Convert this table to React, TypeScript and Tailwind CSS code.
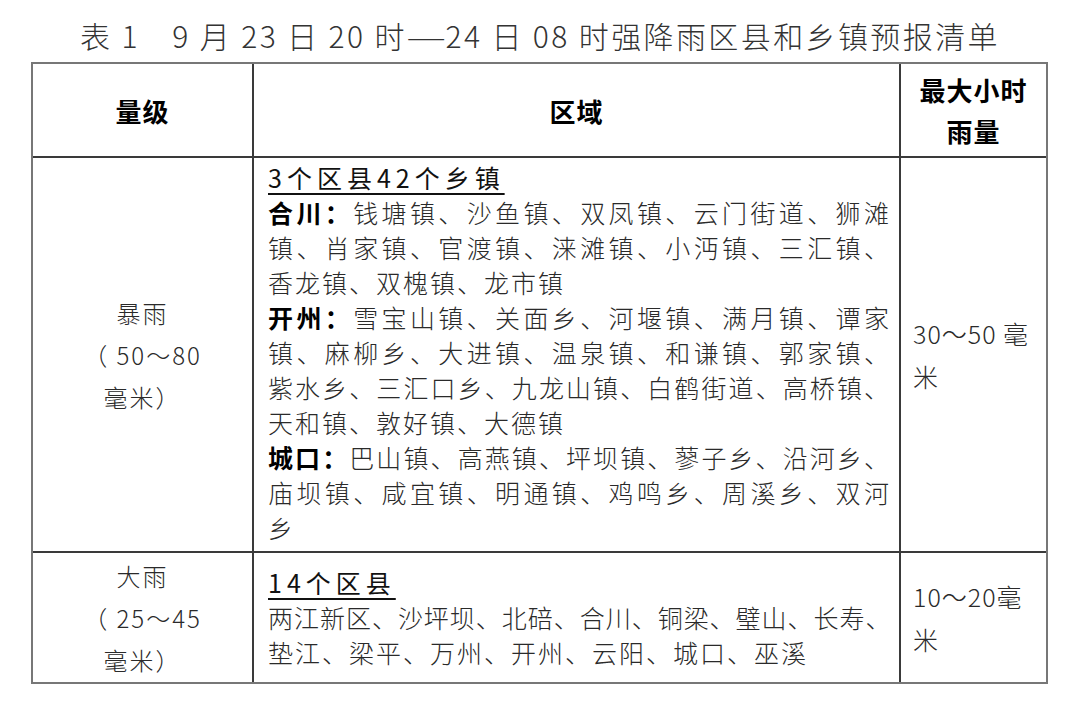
import React from "react";

const cell = "flex flex-col border-[#3a3a3a]";
const line = "whitespace-nowrap";
const full = "whitespace-nowrap text-justify [text-align-last:justify]";
const head = "underline decoration-[1.5px] underline-offset-[5px] font-normal text-[#111] tracking-[5px]";

const App = () => {
  return (
    <div className="w-[1080px] h-[721px] bg-white text-[#2a2a2a] font-['Noto_Sans_CJK_SC','Noto_Sans',sans-serif]">
      <h1 className="h-[62px] pt-[15px] text-center text-[30px] leading-[40px] tracking-[2.4px] font-light text-[#333]">
        表 1　9 月 23 日 20 时<span className="inline-block tracking-normal mx-[6px] scale-x-[1.5]">—</span>24 日 08 时强降雨区县和乡镇预报清单
      </h1>
      <div className="ml-[31px] w-[1017px] border-2 border-[#777] grid grid-cols-[221px_647px_145px] grid-rows-[94px_395px_129px]">
        {/* header */}
        <div className={`${cell} border-r-2 border-b-2 items-center justify-center text-[26px] font-bold text-black tracking-[1px]`}>
          量级
        </div>
        <div className={`${cell} border-r-2 border-b-2 items-center justify-center text-[26px] font-bold text-black tracking-[1px]`}>
          区域
        </div>
        <div className={`${cell} border-b-2 items-center justify-center text-[26px] leading-[41px] font-bold text-black tracking-[1px]`}>
          <span>最大小时</span>
          <span>雨量</span>
        </div>

        {/* 暴雨 */}
        <div className={`${cell} border-r-2 border-b-2 items-center justify-center text-[24px] leading-[42px] tracking-[2px] font-light`}>
          <span>暴雨</span>
          <span>（ 50～80</span>
          <span>毫米）</span>
        </div>
        <div className={`${cell} border-r-2 border-b-2 pl-[14px] pr-[8px] pt-[2px] text-[25px] leading-[35px] tracking-[2px] font-light`}>
          <div className={line}>
            <span className={head}>3个区县42个乡镇</span>
          </div>
          <div className={full}>
            <b className="font-bold text-black">合川：</b>钱塘镇、沙鱼镇、双凤镇、云门街道、狮滩
          </div>
          <div className={full}>镇、肖家镇、官渡镇、涞滩镇、小沔镇、三汇镇、</div>
          <div className={line}>香龙镇、双槐镇、龙市镇</div>
          <div className={full}>
            <b className="font-bold text-black">开州：</b>雪宝山镇、关面乡、河堰镇、满月镇、谭家
          </div>
          <div className={full}>镇、麻柳乡、大进镇、温泉镇、和谦镇、郭家镇、</div>
          <div className={full}>紫水乡、三汇口乡、九龙山镇、白鹤街道、高桥镇、</div>
          <div className={line}>天和镇、敦好镇、大德镇</div>
          <div className={full}>
            <b className="font-bold text-black">城口：</b>巴山镇、高燕镇、坪坝镇、蓼子乡、沿河乡、
          </div>
          <div className={full}>庙坝镇、咸宜镇、明通镇、鸡鸣乡、周溪乡、双河</div>
          <div className={line}>乡</div>
        </div>
        <div className={`${cell} border-b-2 justify-center pl-[12px] text-[25px] leading-[43px] tracking-[1px] font-light`}>
          <span>30～50 毫</span>
          <span>米</span>
        </div>

        {/* 大雨 */}
        <div className={`${cell} border-r-2 items-center justify-center text-[24px] leading-[42px] tracking-[2px] font-light`}>
          <span>大雨</span>
          <span>（ 25～45</span>
          <span>毫米）</span>
        </div>
        <div className={`${cell} border-r-2 justify-center pl-[14px] pr-[8px] text-[25px] leading-[35px] tracking-[2px] font-light`}>
          <div className={line}>
            <span className={head}>14个区县</span>
          </div>
          <div className={`${full} tracking-[0.5px]`}>两江新区、沙坪坝、北碚、合川、铜梁、璧山、长寿、</div>
          <div className={line}>垫江、梁平、万州、开州、云阳、城口、巫溪</div>
        </div>
        <div className={`${cell} justify-center pl-[12px] text-[25px] leading-[43px] tracking-[1px] font-light`}>
          <span>10～20毫</span>
          <span>米</span>
        </div>
      </div>
    </div>
  );
};

export default App;
